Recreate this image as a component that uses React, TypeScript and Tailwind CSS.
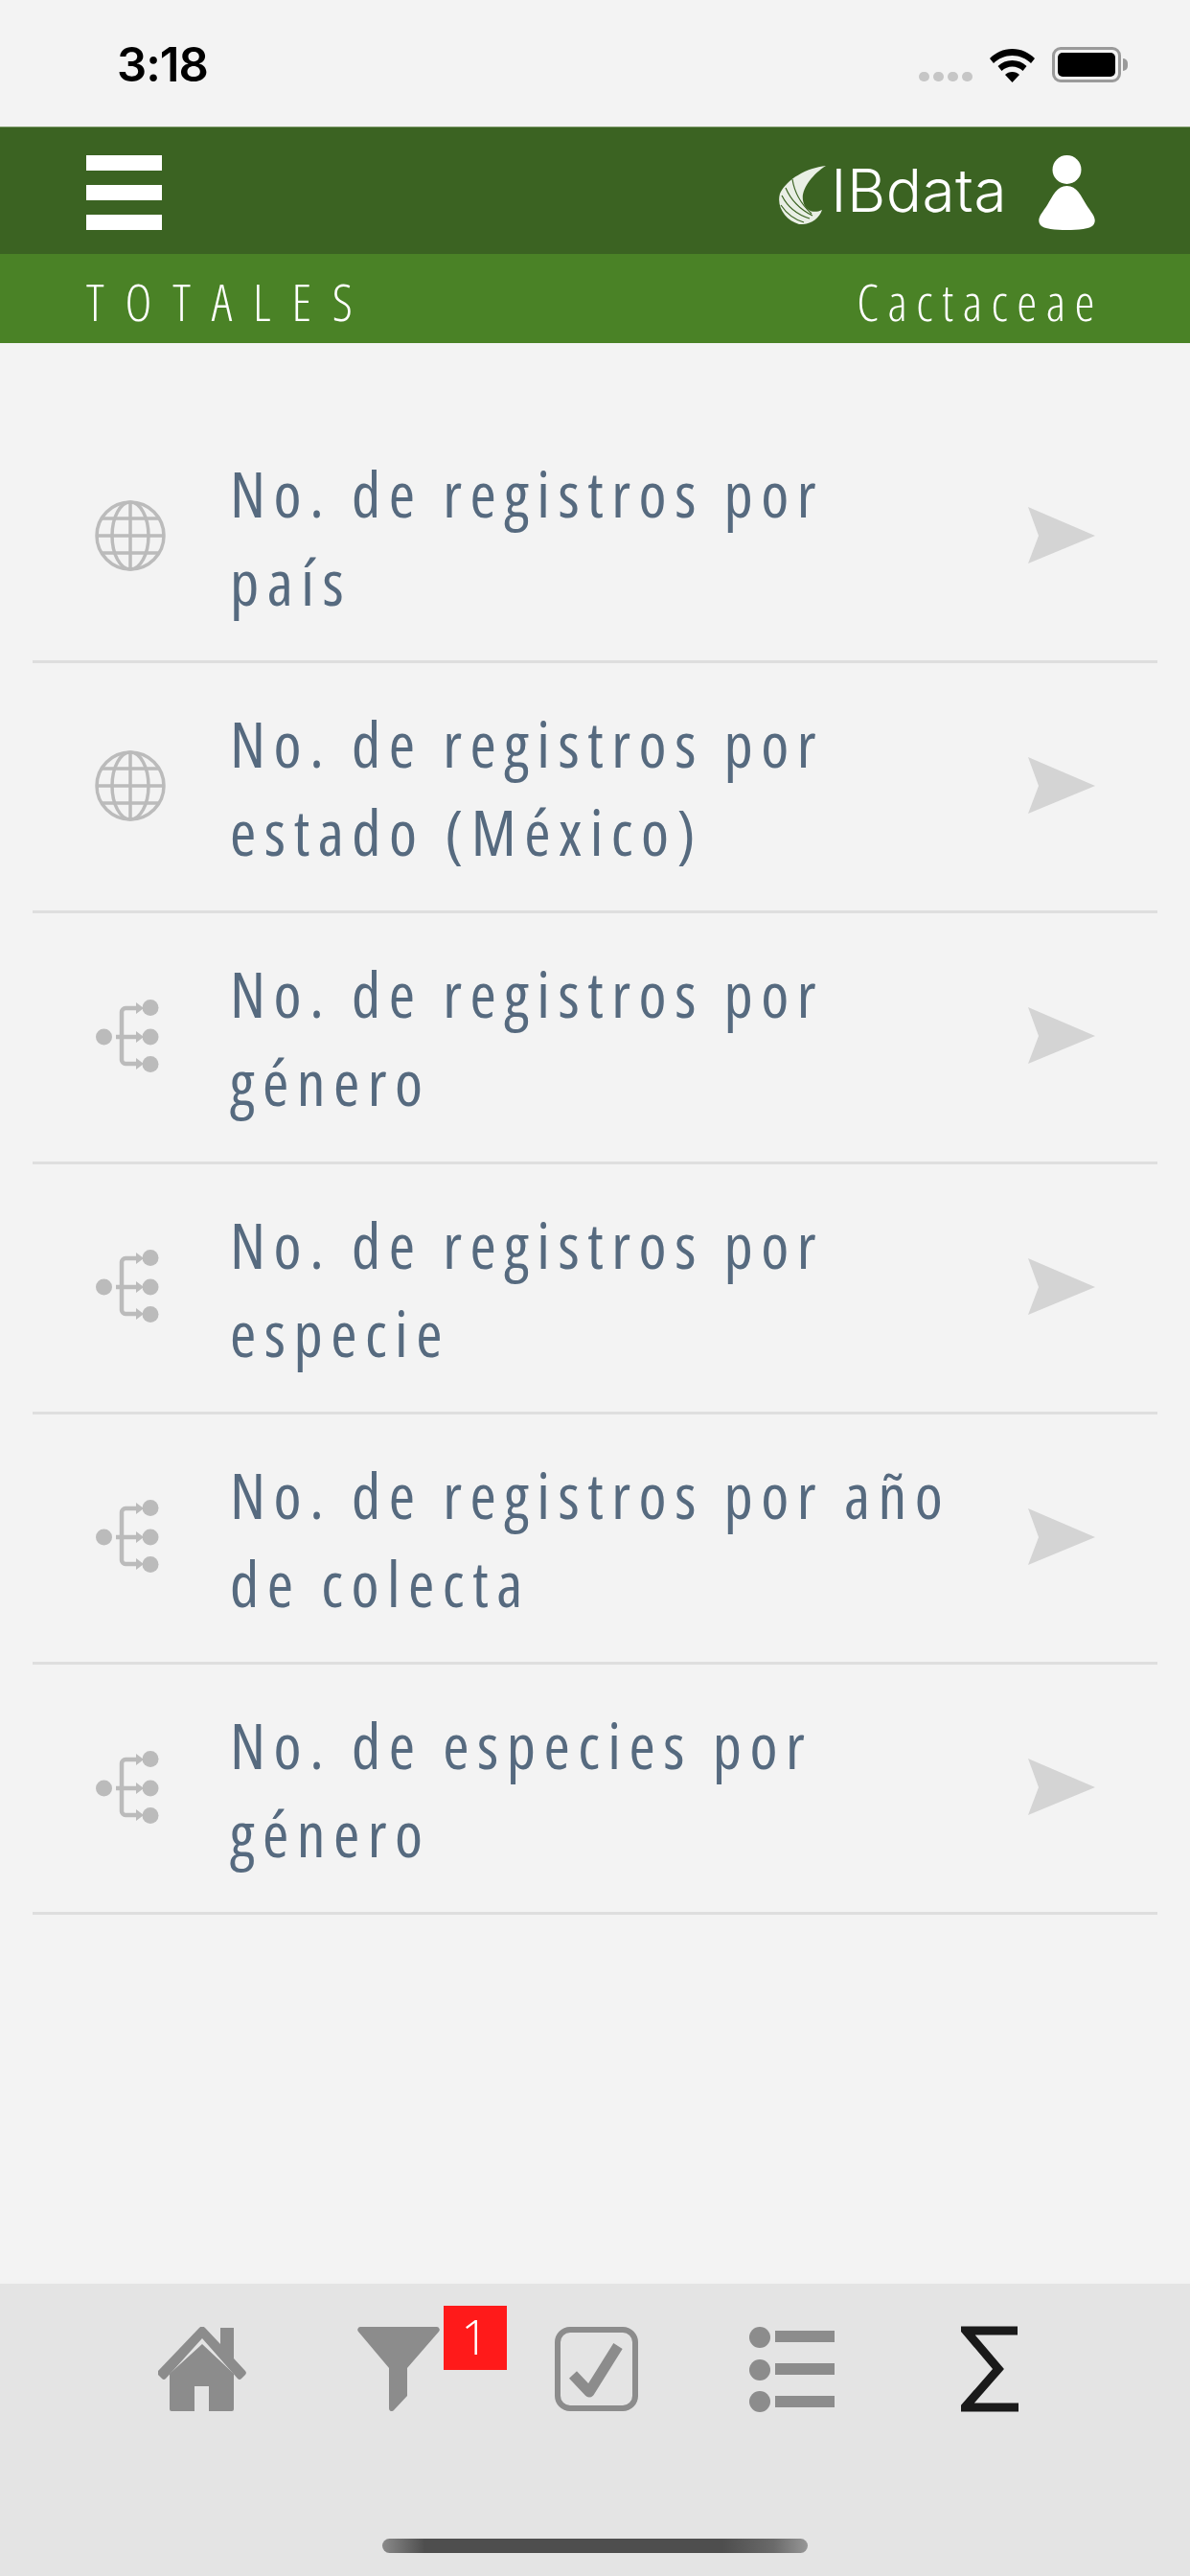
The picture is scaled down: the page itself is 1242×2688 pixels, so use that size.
import React from 'react';

const rows = [
  { icon: 'globe', lines: ['No. de registros por', 'país'] },
  { icon: 'globe', lines: ['No. de registros por', 'estado (México)'] },
  { icon: 'tree', lines: ['No. de registros por', 'género'] },
  { icon: 'tree', lines: ['No. de registros por', 'especie'] },
  { icon: 'tree', lines: ['No. de registros por año', 'de colecta'] },
  { icon: 'tree', lines: ['No. de especies por', 'género'] },
];

const GlobeIcon = () => (
  <svg width="74" height="74" viewBox="0 0 74 74" fill="none" stroke="#bbbbbb" strokeWidth="3.500">
    <circle cx="37" cy="37" r="35" />
    <ellipse cx="37" cy="37" rx="19" ry="35" />
    <path d="M37 2v70M2 37h70M8 19h58M8 55h58" />
  </svg>
);

const TreeIcon = () => (
  <svg width="66" height="76" viewBox="0 0 66 76" fill="none" className="ml-[1px]">
    <circle cx="8.500" cy="39" r="8.500" fill="#bbbbbb" />
    <circle cx="57" cy="8.500" r="8.500" fill="#bbbbbb" />
    <circle cx="57" cy="39" r="8.500" fill="#bbbbbb" />
    <circle cx="57" cy="67.500" r="8.500" fill="#bbbbbb" />
    <path d="M21 39h22M42 9H31c-2 0-4 2-4 4v50c0 2 2 4 4 4h11" stroke="#bbbbbb" strokeWidth="4.500" />
    <path d="M42 3l8 6-8 6zM42 33l8 6-8 6zM42 61l8 6-8 6z" fill="#bbbbbb" />
  </svg>
);

const ArrowIcon = () => (
  <svg width="70" height="59" viewBox="0 0 70 59">
    <path d="M0 0l70 30L0 59l11-29z" fill="#d4d4d4" />
  </svg>
);

const StatusBar = () => (
  <div className="h-[132px] bg-[#f3f3f3] flex items-center justify-between pl-[122px] pr-[65px] pt-[3px]">
    <span className="text-[49px] font-semibold text-black tracking-[-1px] leading-none font-['Inter',sans-serif]">3:18</span>
    <div className="flex items-end gap-[18px]">
      <div className="flex gap-[4px] mb-[1px]">
        {[0, 1, 2, 3].map((i) => (
          <div key={i} className="w-[11px] h-[10px] rounded-full bg-[#c6c6c6]" />
        ))}
      </div>
      <svg width="47" height="35" viewBox="0 0 47 35">
        <path d="M23.500 0C14 0 6 4 0 10l4 5c5-5 12-8 19.500-8S38 10 43 15l4-5C41 4 33 0 23.500 0z" fill="#000" />
        <path d="M23.500 12c-6 0-11 2-15 6l4 5c3-3 7-4.500 11-4.500S31.500 20 34.500 23l4-5c-4-4-9-6-15-6z" fill="#000" />
        <path d="M23.500 24c-3 0-5.500 1-7.500 3l7.500 8 7.500-8c-2-2-4.500-3-7.500-3z" fill="#000" />
      </svg>
      <div className="flex items-center">
        <div className="w-[72px] h-[37px] rounded-[9px] border-[3px] border-[#9a9a9a] p-[3px] flex">
          <div className="flex-1 rounded-[5px] bg-black" />
        </div>
        <div className="w-[5px] h-[13px] rounded-r-full bg-[#9a9a9a] ml-[2px]" />
      </div>
    </div>
  </div>
);

const Header = () => (
  <div className="h-[133px] bg-[#3b6322] border-t border-[#7f9c6c] flex items-center justify-between pl-[90px] pr-[99px] pt-[4px]">
    <div className="flex flex-col gap-[15px] w-[79px]">
      <div className="h-[16px] bg-white" />
      <div className="h-[16px] bg-white" />
      <div className="h-[16px] bg-white" />
    </div>
    <div className="flex items-center">
      <svg width="50" height="62" viewBox="0 0 50 62" fill="none" className="mr-[5px] mt-[3px]">
        <path d="M50 1C30 3 9 15 2 30c-4 14 6 28 20 32 10 1 21-5 24-15-8 4-18 2-20-10C24 25 36 10 50 1z" fill="#e9efe5" />
        <path d="M8 24c5 12 14 22 28 29M4 32c6 12 16 20 29 24M3 42c6 9 14 15 24 18M15 15c2 13 8 25 20 36" stroke="#3b6322" strokeWidth="1.200" />
      </svg>
      <span className="text-[62px] leading-none font-light text-white tracking-[0.500px] font-['Inter',sans-serif] mr-[33px] mt-[-4px]">IBdata</span>
      <svg width="59" height="78" viewBox="0 0 59 78">
        <circle cx="29.500" cy="15" r="15" fill="#fff" />
        <path d="M29.500 32C40 32 44 42 50 52c5 8 12 14 7 21-3 4-16 5-27.500 5S5 77 2 73c-5-7 2-13 7-21 6-10 10-20 20.500-20z" fill="#fff" />
      </svg>
    </div>
  </div>
);

const SubHeader = () => (
  <div className="h-[93px] bg-[#4a8226] flex items-center justify-between pl-[90px] pr-[99px] pt-[5px] text-white font-['Open_Sans',sans-serif] font-light [font-stretch:75%]">
    <span className="text-[53px] tracking-[21.800px] leading-none">TOTALES</span>
    <span className="text-[53px] tracking-[9.500px] leading-none mr-[-9px]">Cactaceae</span>
  </div>
);

const NavBar = () => (
  <div className="h-[305px] bg-[#e4e4e4] flex flex-col items-center">
    <div className="mt-[44px] flex">
      <div className="w-[205px] h-[90px] flex items-center justify-center">
        <svg width="92" height="88" viewBox="0 0 92 88" fill="#8c8c8c">
          <path d="M46 18l33 31v37a2 2 0 0 1-2 2H53V62H38v26H14a2 2 0 0 1-2-2V49z" />
          <path d="M43 1a4 4 0 0 1 6 0l16 17V1h14v32l12 13a3 3 0 0 1 0 4l-4 4a3 3 0 0 1-4 0L46 12 8 54a3 3 0 0 1-4 0l-4-4a3 3 0 0 1 0-4z" />
        </svg>
      </div>
      <div className="w-[205px] h-[90px] flex items-center justify-center relative">
        <svg width="86" height="88" viewBox="0 0 86 88" fill="#8c8c8c">
          <path d="M3 0h80a3 3 0 0 1 2 5L52 43v29L38 87c-2 2-5 1-5-2V43L1 5a3 3 0 0 1 2-5z" />
        </svg>
        <div className="absolute left-[149px] top-[-21px] w-[66px] h-[67px] bg-[#ff1a1a] text-white text-[50px] font-light leading-[64px] text-center font-['Open_Sans',sans-serif]">1</div>
      </div>
      <div className="w-[205px] h-[90px] flex items-center justify-center pl-[3px]">
        <svg width="87" height="88" viewBox="0 0 87 88" fill="none">
          <rect x="3" y="3" width="81" height="82" rx="13" stroke="#8c8c8c" strokeWidth="6" />
          <path d="M19 50l17 18L66 20" stroke="#8c8c8c" strokeWidth="11" strokeLinejoin="round" />
        </svg>
      </div>
      <div className="w-[205px] h-[90px] flex items-center justify-center">
        <svg width="89" height="89" viewBox="0 0 89 89" fill="#8c8c8c">
          <circle cx="11" cy="11" r="11" />
          <circle cx="11" cy="45" r="11" />
          <circle cx="11" cy="78" r="11" />
          <rect x="27" y="4" width="62" height="12" />
          <rect x="27" y="38" width="62" height="12" />
          <rect x="27" y="72" width="62" height="12" />
        </svg>
      </div>
      <div className="w-[205px] h-[90px] flex items-center justify-center pl-[4px]">
        <svg width="60" height="90" viewBox="0 0 60 90" fill="none">
          <path d="M59 5H5l34 40L4 85h56" stroke="#1a1a1a" strokeWidth="9" strokeLinejoin="miter" />
        </svg>
      </div>
    </div>
    <div className="mt-[132px] w-[444px] h-[15px] rounded-full bg-[linear-gradient(90deg,#8a8a8a_0%,#4e4e4e_10%,#4e4e4e_80%,#6a6a6a_92%,#979797_100%)]" />
  </div>
);

export default function App() {
  return (
    <div className="w-[1242px] h-[2688px] bg-[#f3f3f3] flex flex-col overflow-hidden">
      <StatusBar />
      <Header />
      <SubHeader />
      <main className="flex-1 pt-[73px] px-[34px]">
        {rows.map((row, i) => (
          <div key={i} className="h-[261.200px] border-b-[3px] border-[#dedede] flex items-center">
            <div className="w-[206px] pl-[65px] shrink-0 mb-[3px]">
              {row.icon === 'globe' ? <GlobeIcon /> : <TreeIcon />}
            </div>
            <div className="flex-1 text-[#566a7f] text-[66px] leading-[92px] tracking-[8.500px] font-normal font-['Open_Sans',sans-serif] [font-stretch:75%]">
              {row.lines.map((line) => (
                <div key={line}>{line}</div>
              ))}
            </div>
            <div className="pr-[65px] mb-[3px]">
              <ArrowIcon />
            </div>
          </div>
        ))}
      </main>
      <NavBar />
    </div>
  );
}
